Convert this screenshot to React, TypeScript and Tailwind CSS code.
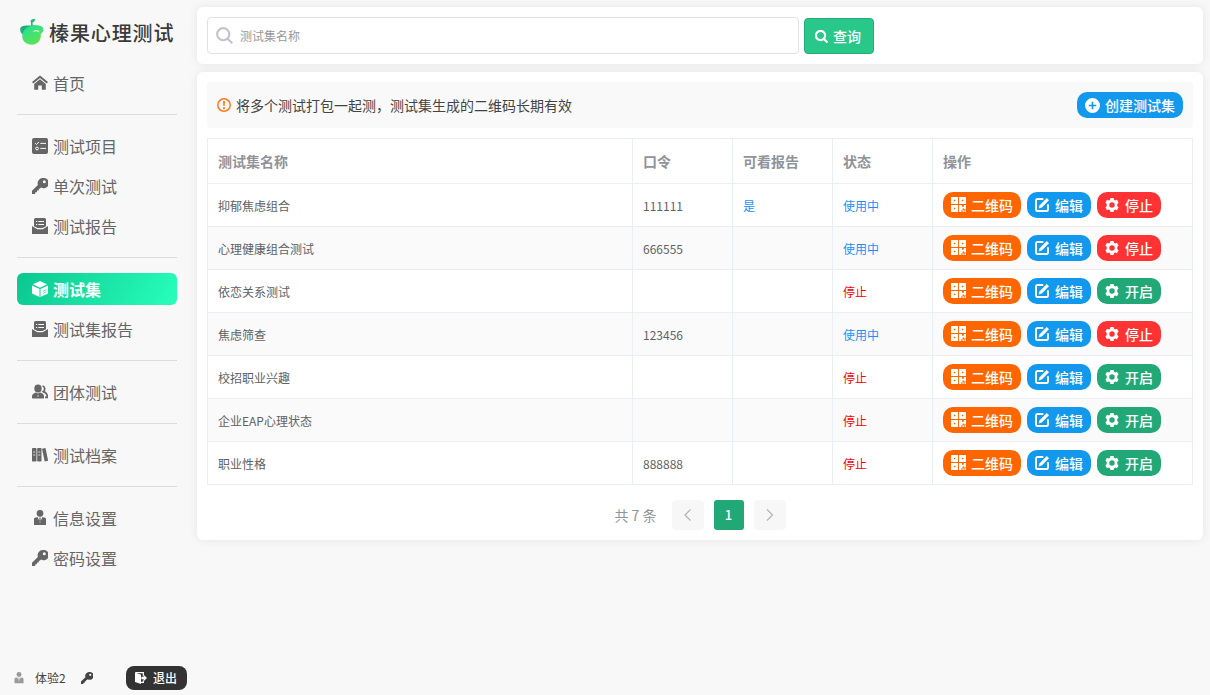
import React from 'react';
import { clsx } from 'clsx';

type IconProps = { className?: string };

const Svg = ({ className, children }: IconProps & { children: React.ReactNode }) => (
  <svg viewBox="0 0 16 16" fill="currentColor" className={clsx('shrink-0', className)}>
    {children}
  </svg>
);

const HomeIcon = ({ className }: IconProps) => (
  <Svg className={className}>
    <path d="M8 .4 0 7l1.3 1.4L8 2.9l6.7 5.5L16 7z" />
    <path d="M8 4.3 2.2 9v5.8h4V10.5h3.6v4.3h4V9z" />
  </Svg>
);

const ListIcon = ({ className }: IconProps) => (
  <Svg className={className}>
    <rect x="0" y="0" width="16" height="16" rx="2" />
    <path d="m3.2 5.2 1.3 1.3 2.4-2.6M8.3 5.4H14M8.3 10.4H14" fill="none" stroke="#f8f8f8" strokeWidth="1" />
    <circle cx="5" cy="10.5" r="1.4" fill="none" stroke="#f8f8f8" strokeWidth="1" />
  </Svg>
);

const KeyIcon = ({ className }: IconProps) => (
  <Svg className={className}>
    <path
      fillRule="evenodd"
      d="M10.8 0A5.2 5.2 0 0 0 5.9 6.9L0 12.8V16h3.2v-1.8H5v-1.8h1.8v-1.6h1l1.2-1.2A5.2 5.2 0 1 0 10.8 0zm1.5 2.3a1.5 1.5 0 1 1 0 3 1.5 1.5 0 0 1 0-3z"
    />
  </Svg>
);

const ReportIcon = ({ className }: IconProps) => (
  <Svg className={className}>
    <path d="M3.5 0h9A1.5 1.5 0 0 1 14 1.5v6.8L10.500 10h-5L2 8.300V1.500A1.500 1.500 0 0 1 3.500 0z" />
    <path d="M4 3.500h1.200M6.300 3.500H12M4 6.500h1.200M6.300 6.500H12" stroke="#f8f8f8" strokeWidth="1" />
    <path d="M0 8 5.200 11.300h5.600L16 8V16H0z" />
  </Svg>
);

const BoxIcon = ({ className }: IconProps) => (
  <Svg className={className}>
    <path d="M8 0 1 3.300 8 6.700l7-3.400z" />
    <path d="M0 4.500 7.500 8v8L0 12.500zM16 4.500 8.500 8v8L16 12.500z" />
    <path d="m11 12.300 3.400-1.600M11 10.300l3.400-1.600" stroke="#19dda2" strokeWidth=".8" />
  </Svg>
);

const GroupIcon = ({ className }: IconProps) => (
  <Svg className={className}>
    <ellipse cx="6" cy="4.500" rx="3.700" ry="4" />
    <path d="M0 12.200C0 10 2.500 9 4 8.500l2 1 2-1c2 .6 4 1.600 4 3.700v1.600c0 .5-.3.700-.800.700H.8c-.5 0-.8-.2-.8-.7z" />
    <path d="m6 10.200-.5 2 .5.900.5-.9z" fill="#f8f8f8" />
    <path d="M10.500 2c2.700.3 2.900 4 .8 5.600 2.100.8 3.900 2.100 3.900 4.500v1.300H13" fill="none" stroke="currentColor" strokeWidth="1.700" />
  </Svg>
);

const ArchiveIcon = ({ className }: IconProps) => (
  <Svg className={className}>
    <rect x="0" y="1" width="4.500" height="13.500" rx=".8" />
    <rect x="5.200" y="1" width="4.300" height="13.500" rx=".8" />
    <path d="m10 1.800 3.500-.9 2.600 12.800-3.400.8z" />
    <path d="M1.200 5h2M1.200 8h2M6.300 5h2M6.300 8h2" stroke="#f8f8f8" strokeWidth=".8" />
  </Svg>
);

const PersonIcon = ({ className }: IconProps) => (
  <Svg className={className}>
    <circle cx="8" cy="3.400" r="3.300" />
    <path d="M2 9.300c0-1 .6-1.600 1.600-1.700l2.200-.4L8 13.200l2.200-6 2.200.4c1 .1 1.600.7 1.600 1.700V15H2z" />
    <path d="M7.200 7.600h1.600l-.3 1.200.5 2.400-1 1.600-1-1.600.5-2.400z" />
  </Svg>
);

const ExitIcon = ({ className }: IconProps) => (
  <Svg className={className}>
    <path d="M0 .8 8 3.500V16l-8-2.700z" />
    <path d="M.5.900h10.600v4M11.100 11.200v2.700H7.500" fill="none" stroke="currentColor" strokeWidth="1.600" />
    <path d="M8.500 6.300h3V3.800L16 8l-4.500 4.200V9.700h-3z" />
  </Svg>
);

const SearchIcon = ({ className, stroke }: IconProps & { stroke: number }) => (
  <svg viewBox="0 0 16 16" fill="none" stroke="currentColor" strokeWidth={stroke} className={clsx('shrink-0', className)}>
    <circle cx="6.800" cy="6.800" r="5.700" />
    <path d="m11 11 4.400 4.400" />
  </svg>
);

const WarnIcon = ({ className }: IconProps) => (
  <Svg className={className}>
    <circle cx="8" cy="8" r="7.100" fill="none" stroke="currentColor" strokeWidth="1.700" />
    <path d="M6.900 3.400h2.200l-.3 5.800H7.200z" />
    <circle cx="8" cy="11.600" r="1.200" />
  </Svg>
);

const PlusIcon = ({ className }: IconProps) => (
  <Svg className={className}>
    <path fillRule="evenodd" d="M8 0a8 8 0 1 0 0 16A8 8 0 0 0 8 0zM7.100 4h1.800v3.100H12v1.800H8.900V12H7.100V8.900H4V7.100h3.100z" />
  </Svg>
);

const QrIcon = ({ className }: IconProps) => (
  <Svg className={className}>
    <path
      fillRule="evenodd"
      d="M0 0h7.500v7.500H0zM3 3v1.600h1.600V3zM8.500 0H16v7.500H8.500zM11.500 3v1.600h1.600V3zM0 8.500h7.500V16H0zM3 11.500v1.600h1.600v-1.600zM8.500 8.500h3.200v2h2v-2H16v4.700h-2v-1h-1.700v2H11V16H8.500zM12.300 14.200h1.300V16h-1.300zM14.500 14.200H16V16h-1.500z"
    />
  </Svg>
);

const EditIcon = ({ className }: IconProps) => (
  <Svg className={className}>
    <path d="M9.500 1.200H2.700A1.500 1.500 0 0 0 1.200 2.700v10.600a1.500 1.500 0 0 0 1.500 1.500h10.600a1.500 1.500 0 0 0 1.500-1.500V7" fill="none" stroke="currentColor" strokeWidth="2.200" />
    <path d="M13.400 0 16 2.500l-8.200 8.400-3.700 1.200 1.200-3.700z" />
  </Svg>
);

const GearIcon = ({ className }: IconProps) => (
  <Svg className={className}>
    <path
      fillRule="evenodd"
      d="M6.200 0h3.600l.5 2.100 1.200.7 2.200-.7 1.800 3.100L14 6.800v2.400l1.500 1.600-1.800 3.100-2.200-.7-1.200.7L9.800 16H6.200l-.5-2.100-1.200-.7-2.200.7L.5 10.800 2 9.200V6.800L.5 5.200l1.800-3.100 2.200.7 1.200-.7zM8 4.900a3.100 3.100 0 1 0 0 6.200 3.100 3.100 0 0 0 0-6.200z"
    />
  </Svg>
);

const Logo = () => (
  <svg viewBox="0 0 24 28" className="w-6 h-7 shrink-0">
    <defs>
      <linearGradient id="nut" x1=".1" y1="0" x2=".7" y2="1">
        <stop offset="0" stopColor="#22e295" />
        <stop offset="1" stopColor="#62e24e" />
      </linearGradient>
    </defs>
    <path d="M11.200 8.500 10.900 4.300C9.800 2.400 11.500 1 15 1c.1 1.900-.9 3-2.500 3.300l.3 4.200z" fill="#22b573" />
    <path d="M3.500 17C.8 15.500.1 13 .2 11 .5 8.300 3.500 7.500 7 7.500h9c4.500-.2 6.800 1.200 7.100 3.500L12 15z" fill="#1fb07a" />
    <path d="M2.300 18.500c0-3 .8-5 2.600-7C7 9.200 10 7.800 14 7.600c5-.3 8.800.8 9.200 3.600.2 2-.8 3.600-2.500 4.600.9 6-3 10.900-8.700 10.900-5.600 0-9.700-3.500-9.700-8.200z" fill="url(#nut)" />
    <path d="M12.800 13.900c2.400-2.600 5.200-2.300 7 .6-2.300-1.400-4.600-1.500-7-.6z" fill="#e6ffe9" />
  </svg>
);

const menu = [
  [{ name: '首页', icon: HomeIcon }],
  [
    { name: '测试项目', icon: ListIcon },
    { name: '单次测试', icon: KeyIcon },
    { name: '测试报告', icon: ReportIcon },
  ],
  [
    { name: '测试集', icon: BoxIcon, active: true },
    { name: '测试集报告', icon: ReportIcon },
  ],
  [{ name: '团体测试', icon: GroupIcon }],
  [{ name: '测试档案', icon: ArchiveIcon }],
  [
    { name: '信息设置', icon: PersonIcon },
    { name: '密码设置', icon: KeyIcon },
  ],
];

const columns = ['测试集名称', '口令', '可看报告', '状态', '操作'];

const rows = [
  { name: '抑郁焦虑组合', code: '111111', report: '是', running: true },
  { name: '心理健康组合测试', code: '666555', report: '', running: true },
  { name: '依恋关系测试', code: '', report: '', running: false },
  { name: '焦虑筛查', code: '123456', report: '', running: true },
  { name: '校招职业兴趣', code: '', report: '', running: false },
  { name: '企业EAP心理状态', code: '', report: '', running: false },
  { name: '职业性格', code: '888888', report: '', running: false },
];

const gridCols = 'grid grid-cols-[425px_100px_100px_100px_260px]';
const cell = 'flex items-center border-r border-b border-[#ebeef5] pl-2.5';
const textCell = clsx(cell, 'pt-0.5');
const pill = 'flex items-center h-[26px] rounded-[10px] pl-2 text-sm font-medium text-white whitespace-nowrap';

function Sidebar() {
  return (
    <aside className="flex flex-col w-[197px] h-full shrink-0">
      <div className="flex items-center h-[67px] pl-5 pb-[3px]">
        <Logo />
        <span className="ml-[5px] pt-px text-[20px] leading-none tracking-[0.9px] font-medium text-[#3a3a3a] whitespace-nowrap">榛果心理测试</span>
      </div>

      <nav className="w-40 ml-[17px]">
        {menu.map((group, i) => (
          <div key={i} className={clsx('flex flex-col gap-2', i > 0 && 'mt-[15px] pt-[15px] border-t border-[#dcdcdc]')}>
            {group.map((item: { name: string; icon: React.FC<IconProps>; active?: boolean }) => (
              <a
                key={item.name}
                className={clsx(
                  'flex items-center h-8 pl-[15px] rounded-md text-base',
                  item.active
                    ? 'bg-linear-[120deg] from-[#0bc78f] to-[#28ffbb] text-white font-bold'
                    : 'text-[#666]'
                )}
              >
                <item.icon className="size-4" />
                <span className="ml-[5px]">{item.name}</span>
              </a>
            ))}
          </div>
        ))}
      </nav>

      <div className="mt-auto mb-[5px] h-6 flex items-center text-xs text-[#444]">
        <PersonIcon className="size-3 ml-[13px] text-[#999]" />
        <span className="ml-2.5">体验2</span>
        <KeyIcon className="size-3 ml-[15px]" />
        <button className="ml-auto mr-2.5 w-[61px] h-6 rounded-lg bg-[#333] flex items-center pl-[9px] text-white font-medium">
          <ExitIcon className="size-3" />
          <span className="ml-[6px]">退出</span>
        </button>
      </div>
    </aside>
  );
}

export default function App() {
  return (
    <div className="flex w-full h-screen overflow-hidden bg-[#f8f8f8] font-['Noto_Sans_CJK_SC',sans-serif]">
      <Sidebar />

      <main className="flex-1 pt-[7px] pr-[7px]">
        {/* Search */}
        <div className="flex items-center h-[57px] px-2.5 rounded-md bg-white shadow-[0_0_10px_rgba(0,0,0,0.08)]">
          <div className="flex items-center w-[592px] h-[37px] pl-2 rounded border border-[#e2e2e6]">
            <SearchIcon stroke={2} className="size-[17px] text-[#c0c4cc]" />
            <span className="ml-[7px] text-xs text-[#999]">测试集名称</span>
          </div>
          <button className="ml-[5px] mt-px w-[70px] h-9 flex items-center pl-2.5 rounded bg-[#29c78a] border border-[#22b07a] text-white text-sm font-medium">
            <SearchIcon stroke={2.6} className="size-[13px]" />
            <span className="ml-[5px]">查询</span>
          </button>
        </div>

        <div className="mt-2 h-[468px] p-2.5 rounded-md bg-white shadow-[0_0_10px_rgba(0,0,0,0.08)]">
          {/* Notice */}
          <div className="flex items-center h-[46px] px-2.5 rounded bg-[#f9f9f9] text-sm text-[#444]">
            <WarnIcon className="size-3.5 text-[#ff7a1a]" />
            <span className="ml-[5px]">将多个测试打包一起测，测试集生成的二维码长期有效</span>
            <button className={clsx(pill, 'ml-auto w-[106px] bg-[#1298ec]')}>
              <PlusIcon className="size-[15px]" />
              <span className="ml-[5px]">创建测试集</span>
            </button>
          </div>

          {/* Table */}
          <div className="mt-2.5 border-t border-l border-[#ebeef5] text-xs text-[#606266]">
            <div className={clsx(gridCols, 'h-[45px] text-sm font-bold text-[#909399]')}>
              {columns.map((title) => (
                <div key={title} className={cell}>{title}</div>
              ))}
            </div>
            {rows.map((row, i) => (
              <div key={row.name} className={clsx(gridCols, 'h-[43px]', i % 2 === 1 && 'bg-[#fafafa]')}>
                <div className={textCell}>{row.name}</div>
                <div className={textCell}>{row.code}</div>
                <div className={clsx(textCell, 'text-[#1a90ff]')}>{row.report}</div>
                <div className={clsx(textCell, row.running ? 'text-[#1a90ff]' : 'text-[#f00]')}>
                  {row.running ? '使用中' : '停止'}
                </div>
                <div className={clsx(cell, 'gap-1.5')}>
                  <button className={clsx(pill, 'w-[78px] bg-[#ff6600]')}>
                    <QrIcon className="size-[15px] -mt-px" />
                    <span className="ml-[5px]">二维码</span>
                  </button>
                  <button className={clsx(pill, 'w-16 bg-[#1298ec]')}>
                    <EditIcon className="size-3.5" />
                    <span className="ml-[6px]">编辑</span>
                  </button>
                  <button className={clsx(pill, 'w-16', row.running ? 'bg-[#ff3333]' : 'bg-[#22a876]')}>
                    <GearIcon className="size-3.5" />
                    <span className="ml-[6px]">{row.running ? '停止' : '开启'}</span>
                  </button>
                </div>
              </div>
            ))}
          </div>

          {/* Pagination */}
          <div className="mt-[15px] flex items-center justify-center h-[30px] gap-2.5 text-sm text-[#909399]">
            <span className="mr-[5px]">共 7 条</span>
            <button className="w-8 h-[30px] flex items-center justify-center rounded bg-[#f7f7f7]">
              <svg viewBox="0 0 12 12" className="size-3" fill="none" stroke="#b4b4b4" strokeWidth="1.2">
                <path d="M8.500.5 3 6l5.500 5.500" />
              </svg>
            </button>
            <button className="w-[30px] h-[30px] rounded-[3px] bg-[#22a876] pt-px text-[13px] text-white font-medium">1</button>
            <button className="w-8 h-[30px] flex items-center justify-center rounded bg-[#f7f7f7]">
              <svg viewBox="0 0 12 12" className="size-3" fill="none" stroke="#b4b4b4" strokeWidth="1.2">
                <path d="M3 .5 8.500 6 3 11.500" />
              </svg>
            </button>
          </div>
        </div>
      </main>
    </div>
  );
}
